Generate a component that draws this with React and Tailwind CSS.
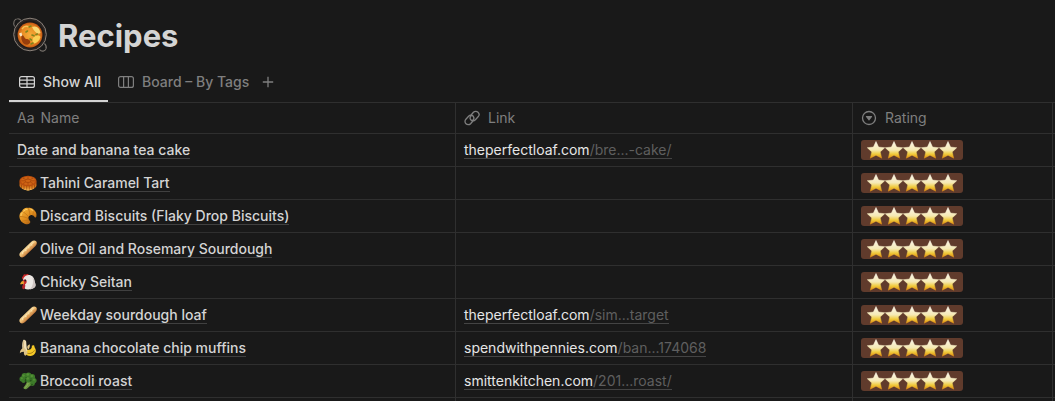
import React from "react";

function Defs() {
  return (
    <svg className="absolute h-0 w-0" aria-hidden="true">
      <defs>
        <linearGradient id="starFill" x1="0" y1="0" x2="0" y2="1">
          <stop offset="0" stopColor="#fbf6ea" />
          <stop offset="0.5" stopColor="#f5e9b4" />
          <stop offset="0.75" stopColor="#f0cb3c" />
          <stop offset="1" stopColor="#e08a10" />
        </linearGradient>
        <linearGradient id="loafFill" x1="0.35" y1="0.35" x2="0.65" y2="0.65">
          <stop offset="0" stopColor="#f8dfa4" />
          <stop offset="0.5" stopColor="#eebb70" />
          <stop offset="1" stopColor="#b5652c" />
        </linearGradient>
        <linearGradient id="croissantFill" x1="0" y1="0" x2="0.8" y2="1">
          <stop offset="0" stopColor="#f7b83c" />
          <stop offset="0.6" stopColor="#dd8a1c" />
          <stop offset="1" stopColor="#9a5210" />
        </linearGradient>
        <linearGradient id="mooncakeSide" x1="0" y1="0" x2="0" y2="1">
          <stop offset="0" stopColor="#b04a0c" />
          <stop offset="0.6" stopColor="#d97a1c" />
          <stop offset="1" stopColor="#fcc05a" />
        </linearGradient>
        <radialGradient id="soupFill">
          <stop offset="0" stopColor="#f6ad3a" />
          <stop offset="0.7" stopColor="#e88a22" />
          <stop offset="1" stopColor="#c75a14" />
        </radialGradient>
      </defs>
    </svg>
  );
}

function Pot() {
  return (
    <svg viewBox="0 0 36 36" className="h-9 w-9 shrink-0" aria-hidden="true">
      <g fill="none" stroke="#77716b" strokeWidth="1.1">
        <path d="M2.600 9.500C.5 5.500 2.500 1.800 5.500 1.700 7.200 1.600 8.400 2.400 9 3.600" />
        <path d="M27.500 32.500c2 2.600 5.500 1.900 6.500-.6.700-1.900.2-3.700-1.500-5.400" />
      </g>
      <circle cx="18" cy="17.500" r="16.300" fill="#2c2725" stroke="#8b8179" strokeWidth="1" />
      <circle cx="18" cy="17.500" r="14" fill="#1f1a18" />
      <circle cx="18" cy="18" r="12.400" fill="url(#soupFill)" />
      <path d="M20 10c5-2 8 2 8.500 6-3 2-6-1-8.500-6z" fill="#f9d873" />
      <path d="M21 21c3-3 6-3 7.500-1-1 4-4 6-6 6.500-2-1-2.500-3-1.500-5.500z" fill="#fbd054" />
      <path d="M10 18c2 0 2 3 4 4 3 0 5 2 4 4-2 3-7 2-8-2-1-2-1-4 0-6z" fill="#983e0c" />
      <path d="M7 16.500l2.500-1 .8 3-2 1z" fill="#f6e6c8" />
      <path d="M10 12c2-3 5-3 7-2" fill="none" stroke="#f5c254" strokeWidth="1.500" />
      <path d="M17 10l2-1M14 15l1.500-1M20 18l2 .8M24 17.500l1.500-.5M18 22l1.500 1M19 27l2-1" stroke="#7d851e" strokeWidth="1.600" strokeLinecap="round" />
    </svg>
  );
}

function Mooncake() {
  return (
    <svg viewBox="0 0 18 18" className="h-[18px] w-[18px]" aria-hidden="true">
      <path d="M.5 7.500v4c0 1.300 1 1.300 1.300 2.300 1 .2 1.300 1.600 2.600 1.400 1 1 2 .5 2.800 1 1 .6 2.600.6 3.600 0 .800-.5 1.800 0 2.800-1 1.300.2 1.600-1.200 2.600-1.400.3-1 1.300-1 1.300-2.300v-4z" fill="url(#mooncakeSide)" />
      <path d="M2.500 10.500v3.500M5 11.500v3.500M7.700 12v3.700M10.300 12v3.700M13 11.500v3.500M15.500 10.500v3.500" stroke="#8e3a08" strokeWidth=".6" />
      <ellipse cx="9" cy="7" rx="8.600" ry="5.200" fill="#b94e0e" />
      <ellipse cx="9" cy="6.800" rx="7.200" ry="4.100" fill="#cf6414" />
      <g fill="none" stroke="#a24209" strokeWidth=".7">
        <ellipse cx="9" cy="6.800" rx="3" ry="1.700" />
        <path d="M9 2.800v2.200M9 8.600v2.200M2.200 6.800h3.500M12.300 6.800h3.500M4 4.200l2.500 1.200M14 4.200l-2.500 1.200M4 9.500l2.500-1.200M14 9.500l-2.500-1.200" />
      </g>
    </svg>
  );
}

function Croissant() {
  return (
    <svg viewBox="0 0 18 18" className="h-[18px] w-[18px]" aria-hidden="true">
      <path d="M8.500 17.300C4.500 17.200 1 14 .5 10.200.2 7.500 1.300 5 3 4.200 4 1.800 6.600.3 9 1c2.500-.6 5 .4 6.200 2.300C17 4.500 18 7 17.300 9.800c-.3 1-1.200 1-1.700.2-.8-1.400-2-2.200-3.300-2-2.200.2-3.300 1.900-2.800 3.700.3 1 1.200 1.800 1.700 2.800.5 1.200-.9 2.800-2.700 2.800z" fill="url(#croissantFill)" />
      <path d="M3 4.200c1.700 1 4.500 2.700 6.500 5.600M9 1c.8 1.600 1.800 4 2 7M15.200 3.300c-.6 1.300-1.300 3-1.400 5M.5 9.500c2.800-.2 6 .6 8.700 2M2.500 14.500c2-.8 5-1.300 7.500-1.200" fill="none" stroke="#b96c14" strokeWidth=".6" />
      <path d="M4.500 4.300c1-1.500 2.500-2 3.500-1.800M2 8.500c0-1.200.5-2 1.200-2.500M12 2.500c1 .2 1.500.5 2 1" fill="none" stroke="#ffd878" strokeWidth=".9" strokeLinecap="round" />
    </svg>
  );
}

function Baguette() {
  return (
    <svg viewBox="0 0 18 18" className="h-[18px] w-[18px]" aria-hidden="true">
      <path d="M1.300 16.700C-.1 15.300.1 13.500 1.700 12L12.300 1.800c1.700-1.500 3.600-1.700 4.800-.6s1 3-.6 4.700L6.100 16c-1.600 1.500-3.500 2-4.800.7z" fill="url(#loafFill)" />
      <path d="M3.600 13.500c-.6-1 .4-2.300 1.500-2.700M6.700 10.700c-.6-1 .4-2.300 1.500-2.700M9.700 7.900c-.6-1 .4-2.300 1.500-2.700M12.600 5.100c-.6-1 .4-2.100 1.500-2.400" fill="none" stroke="#fcecc0" strokeWidth="1" strokeLinecap="round" />
      <path d="M4.800 14.300l1.500-2.600M8 11.400l1.500-2.600M11 8.600l1.500-2.600M14 5.700l1.300-2.200" fill="none" stroke="#cf8440" strokeWidth=".5" />
    </svg>
  );
}

function Chicken() {
  return (
    <svg viewBox="0 0 18 18" className="h-[18px] w-[18px]" aria-hidden="true">
      <path d="M3.800 6.500C2.500 5 3 3.200 4.300 3.200 4 1.500 5.800.7 6.800 1.800 7.500.4 9.700.7 9.800 2.300L8 5z" fill="#cf2a2a" />
      <path d="M3.800 8C4.200 4.500 6.500 2.200 9.500 2c3.500-.1 5.500 2.300 6 5.500.2 2 1.500 3.500 1 5.500-.8 2.400-4.500 3.500-7.500 3.400-2.500 0-4-.9-4.300-2.900C4.400 11.500 3.500 10.500 3.800 8z" fill="#ece8e4" />
      <path d="M13.500 4c1.600 1.500 1.800 3.500 2.300 5.200.6 1.500 1 3 .3 4.600-1 1.600-3 2.300-5.100 2.500 3-3.300 3.800-7.500 2.500-12.300z" fill="#cfc5c2" />
      <path d="M4.200 7c1.200-1 3.300-.5 3.500 1.500 0 1.700-1 2.800-2.500 2.700-1 0-1.500-1.200-1.500-2.500z" fill="#c92a2c" />
      <path d="M4.700 10.600c1.300 0 1.800 1.300 1.500 3-.2 1.500-.8 2.700-1.700 2.700-1.200 0-1.500-1.800-1.200-3.200z" fill="#b8232a" />
      <path d="M4.500 8C3 7.700 1.700 9 1 11.200c1.500.2 3.300 0 4.200-1z" fill="#e8a32c" />
      <circle cx="6.300" cy="7.500" r=".9" fill="#241c1a" />
    </svg>
  );
}

function Banana() {
  return (
    <svg viewBox="0 0 18 18" className="h-[18px] w-[18px]" aria-hidden="true">
      <path d="M12.800 6.800c.8-.9 1.800-.8 2.400-.2.300 1.200.5 2.300 1.300 3.400 1.200 3.200-1 6.700-5 6.900-2.800.1-5.400-1-6.200-3.900l3.200-2.500c2.700.8 4.800-.8 4.300-3.700z" fill="#f5c927" />
      <path d="M7.500 14c3 1.200 6.200.3 8-2.700" fill="none" stroke="#8d6410" strokeWidth=".7" />
      <path d="M4.200 12.500C2.800 8.500 3 3 4.500.8c1.300-.6 2.500.5 2.700 2 .2 3 .4 6 1.300 9.400z" fill="#f1dfb6" />
      <path d="M5 1.500c-.8 3-.7 7 .2 10" fill="none" stroke="#c5a66b" strokeWidth=".7" />
      <path d="M5.200 9C2.800 9 1 11 .8 14.300 2.600 12.600 4 13 5 12.500c-.5 2 .2 3.700 1.500 4.500.3-1.500 1.200-2.300 2.400-2.700C7.500 12.500 7.500 10.500 5.200 9z" fill="#dfc487" />
      <path d="M8.500 9.500c-.8-2 .2-3.500 2.300-4.200.3 2.200-.3 3.700-1.300 4.900z" fill="#e7c885" />
    </svg>
  );
}

function Broccoli() {
  return (
    <svg viewBox="0 0 18 18" className="h-[18px] w-[18px]" aria-hidden="true">
      <path d="M8 8c.2 3-2 5.500-3.500 7.500-.3 1.500 1.800 2 3 1.500 2-1 3-3.600 6-4.200l-.5-4z" fill="#6a9840" />
      <path d="M9.200 11c-.5 2.300-2 3.700-3.500 5" fill="none" stroke="#98b964" strokeWidth=".8" />
      <g fill="#3d7a2a">
        <circle cx="3.300" cy="7" r="2.800" /><circle cx="5.500" cy="4" r="2.900" /><circle cx="9.500" cy="3.300" r="2.900" />
        <circle cx="13.200" cy="5" r="2.900" /><circle cx="15" cy="8.500" r="2.600" /><circle cx="13.500" cy="11.500" r="2.400" />
        <circle cx="9.500" cy="7.500" r="3" /><circle cx="4.500" cy="9" r="2" />
      </g>
      <g fill="#549035">
        <circle cx="4.500" cy="3.600" r="1.200" /><circle cx="8.800" cy="2.500" r="1.300" /><circle cx="12.800" cy="4" r="1.200" />
        <circle cx="2.800" cy="6.300" r="1" /><circle cx="8.800" cy="6.500" r="1.200" /><circle cx="15" cy="7.800" r="1" />
      </g>
      <g fill="#235218">
        <circle cx="6.500" cy="8.700" r=".9" /><circle cx="11.600" cy="8.700" r=".9" /><circle cx="7" cy="5.500" r=".6" /><circle cx="12" cy="6.800" r=".6" /><circle cx="13" cy="12.500" r=".8" />
      </g>
    </svg>
  );
}

function TableIcon() {
  return (
    <svg viewBox="0 0 16 16" className="h-4 w-4" fill="none" stroke="currentColor" strokeWidth="1.200" aria-hidden="true">
      <rect x=".6" y="2.600" width="14.800" height="10.800" rx="2" />
      <path d="M.6 6.200h14.800M.6 9.800h14.800M8 2.600v10.800" />
    </svg>
  );
}

function BoardIcon() {
  return (
    <svg viewBox="0 0 16 16" className="h-4 w-4" fill="none" stroke="currentColor" strokeWidth="1.200" aria-hidden="true">
      <rect x=".6" y="2.600" width="14.800" height="10.800" rx="2" />
      <path d="M5.600 2.600v10.800M10.400 2.600v10.800" />
    </svg>
  );
}

function PlusIcon() {
  return (
    <svg viewBox="0 0 12 12" className="h-3 w-3" stroke="currentColor" strokeWidth="1.300" aria-hidden="true">
      <path d="M6 .8v10.400M.8 6h10.400" />
    </svg>
  );
}

function ChainIcon() {
  return (
    <svg viewBox="0 0 16 16" className="h-4 w-4" fill="none" stroke="currentColor" strokeWidth="1.300" strokeLinecap="round" aria-hidden="true">
      <path d="M7.300 4.700 9.400 2.300a3.200 3.200 0 0 1 4.700 4.500l-2.700 2.900a3.200 3.200 0 0 1-4.700 0 2.800 2.800 0 0 1 .2-3.600" />
      <path d="M8.700 11.300l-2.100 2.400a3.200 3.200 0 0 1-4.700-4.500l2.700-2.900a3.200 3.200 0 0 1 4.700 0 2.800 2.800 0 0 1-.2 3.600" />
    </svg>
  );
}

function SelectIcon() {
  return (
    <svg viewBox="0 0 16 16" className="h-4 w-4" aria-hidden="true">
      <circle cx="8" cy="8" r="6.500" fill="none" stroke="currentColor" strokeWidth="1.300" />
      <path d="M5.300 6h5.400c.4 0 .6.400.4.700L8.400 10.200c-.2.300-.6.300-.8 0L4.900 6.700c-.2-.3 0-.7.4-.7z" fill="currentColor" />
    </svg>
  );
}

function Star() {
  return (
    <svg viewBox="0 0 18 18" className="h-[18px] w-[18px]" aria-hidden="true">
      <path d="M9 .5l2.600 5.600 6.100.6-4.500 4.200 1.500 6.300L9 14.200l-5.700 3 1.500-6.300L.3 6.700l6.100-.6z" fill="url(#starFill)" stroke="url(#starFill)" strokeWidth=".5" strokeLinejoin="round" />
    </svg>
  );
}

const recipes = [
  { name: "Date and banana tea cake", host: "theperfectloaf.com", path: "/bre...-cake/" },
  { name: "Tahini Caramel Tart", Icon: Mooncake },
  { name: "Discard Biscuits (Flaky Drop Biscuits)", Icon: Croissant },
  { name: "Olive Oil and Rosemary Sourdough", Icon: Baguette },
  { name: "Chicky Seitan", Icon: Chicken },
  { name: "Weekday sourdough loaf", Icon: Baguette, host: "theperfectloaf.com", path: "/sim...target" },
  { name: "Banana chocolate chip muffins", Icon: Banana, host: "spendwithpennies.com", path: "/ban...174068" },
  { name: "Broccoli roast", Icon: Broccoli, host: "smittenkitchen.com", path: "/201...roast/" },
];

const cell = "h-[33px] border-b border-r border-[#2f2f2f] px-2 py-0";
const head = "h-[31px] border-b border-r border-[#2f2f2f] px-2 py-0 text-left font-normal";

function Rating() {
  return (
    <div role="img" aria-label="5 stars" className="flex h-5 w-fit items-center rounded-[3px] bg-[#603b2c] px-1.5">
      {[1, 2, 3, 4, 5].map((n) => (
        <Star key={n} />
      ))}
    </div>
  );
}

export default function App() {
  return (
    <main className="h-screen overflow-hidden bg-[#191919] pl-[9px] font-['Inter','Liberation_Sans',sans-serif] text-sm text-[#d4d4d4]">
      <Defs />
      <header className="flex h-[62px] items-center gap-2.5 pl-[3px] pt-2">
        <Pot />
        <h1 className="pt-0.5 text-[31px] leading-10 font-bold">Recipes</h1>
      </header>
      <nav className="flex h-10 font-medium text-[#7f7f7f]">
        <button type="button" className="flex items-center gap-2 border-b-2 border-[#d4d4d4] pt-0.5 pr-[7px] pl-2.5 text-[#d4d4d4]">
          <TableIcon />
          Show All
        </button>
        <button type="button" className="flex items-center gap-2 border-b-2 border-transparent pt-0.5 pr-[7px] pl-2.5">
          <BoardIcon />
          Board – By Tags
        </button>
        <button type="button" aria-label="Add view" className="flex items-center border-b-2 border-transparent px-1.5 pt-0.5">
          <PlusIcon />
        </button>
      </nav>
      <table className="w-full table-fixed border-separate border-spacing-0 border-t border-[#2f2f2f]">
        <colgroup>
          <col className="w-[447px]" />
          <col className="w-[397px]" />
          <col className="w-[200px]" />
          <col />
        </colgroup>
        <thead className="text-[#7f7f7f]">
          <tr>
            <th scope="col" className={head}>
              <span className="flex items-center gap-1.5"><span aria-hidden="true">Aa</span>Name</span>
            </th>
            <th scope="col" className={head}>
              <span className="flex items-center gap-2"><ChainIcon />Link</span>
            </th>
            <th scope="col" className={head}>
              <span className="flex items-center gap-2"><SelectIcon />Rating</span>
            </th>
            <td className="border-b border-[#2f2f2f] p-0" />
          </tr>
        </thead>
        <tbody>
          {recipes.map(({ name, Icon, host, path }) => (
            <tr key={name}>
              <td className={cell}>
                <div className="flex items-center">
                  {Icon && <span className="mr-[3px] ml-0.5"><Icon /></span>}
                  <a href="#" className="border-b border-[#404040] leading-4 font-medium whitespace-nowrap">{name}</a>
                </div>
              </td>
              <td className={cell}>
                {host && (
                  <a href="#" className="block w-fit border-b border-[#444444] leading-4 whitespace-nowrap text-[#e6e6e6]">
                    {host}
                    <span className="text-[#5f5f5f]">{path}</span>
                  </a>
                )}
              </td>
              <td className={cell}>
                <Rating />
              </td>
              <td className="border-b border-[#2f2f2f] p-0" />
            </tr>
          ))}
          <tr>
            <td className={cell} />
            <td className={cell} />
            <td className={cell} />
            <td className="border-b border-[#2f2f2f] p-0" />
          </tr>
        </tbody>
      </table>
    </main>
  );
}
